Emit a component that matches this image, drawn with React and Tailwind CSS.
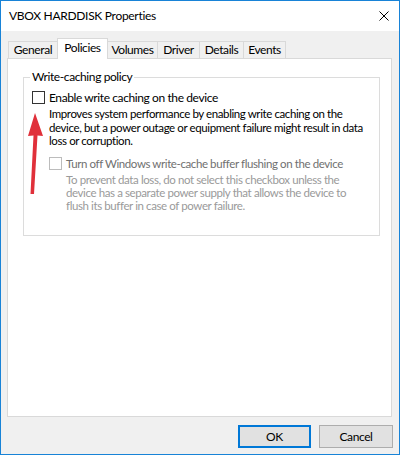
import React from 'react';

const tabs = [
  { name: 'General', w: 'w-[50px]' },
  { name: 'Policies', w: 'w-[51px]', active: true },
  { name: 'Volumes', w: 'w-[51px]' },
  { name: 'Driver', w: 'w-[43px]' },
  { name: 'Details', w: 'w-[45px]' },
  { name: 'Events', w: 'w-[43px]' },
];

function Checkbox({ disabled }) {
  return (
    <div
      className={`w-[13px] h-[13px] shrink-0 bg-white border ${
        disabled ? 'border-[#bcbcbc]' : 'border-[#333333]'
      }`}
    />
  );
}

export default function App() {
  return (
    <div
      className="relative w-[400px] h-[455px] flex flex-col bg-[#f0f0f0] border border-[#1883d7] text-[11.5px] tracking-[-0.4px] text-black overflow-hidden whitespace-nowrap"
      style={{ fontFamily: 'Lato, "Noto Sans", sans-serif' }}
    >
      {/* Title bar */}
      <div className="h-[30px] shrink-0 bg-white flex items-center justify-between pl-[8px] pr-[10px]">
        <span className="leading-none text-[12px] tracking-[-0.3px]">VBOX HARDDISK Properties</span>
        <svg width="10" height="10" viewBox="0 0 10 10">
          <path d="M0.5 0.5 L9.5 9.5 M9.5 0.5 L0.5 9.5" stroke="#000" strokeWidth="1" />
        </svg>
      </div>

      {/* Tabs */}
      <div className="pt-[7px] pl-[7px] h-[27px] shrink-0 flex items-end">
        {tabs.map((t, i) => (
          <div
            key={t.name}
            className={`${t.w} ${i > 0 ? '-ml-px' : ''} flex items-center justify-center border-l border-t border-r border-[#d9d9d9] leading-none text-[12px] ${
              t.active
                ? 'h-[21px] -mb-px bg-white relative z-10 pb-[2px]'
                : 'h-[17px] bg-[#f0f0f0]'
            }`}
          >
            {t.name}
          </div>
        ))}
      </div>

      {/* Panel */}
      <div className="ml-[6px] w-[385px] h-[359px] shrink-0 bg-white border border-[#d9d9d9]">
        <div className="relative ml-[15px] mt-[18px] w-[357px] h-[159px] border border-[#dcdcdc]">
          <span className="absolute -top-[9px] left-[6px] px-[2px] bg-white leading-[16px] text-[12px]">
            Write-caching policy
          </span>

          <div className="pl-[8px] pt-[12px]">
            <div className="flex items-center gap-[4px] h-[15px]">
              <Checkbox />
              <span className="leading-[15px] text-[12px]">Enable write caching on the device</span>
            </div>
            <div className="pl-[17px] mt-[2px] leading-[13.5px]">
              <div>Improves system performance by enabling write caching on the</div>
              <div>device, but a power outage or equipment failure might result in data</div>
              <div>loss or corruption.</div>
            </div>

            <div className="pl-[17px] mt-[8px]">
              <div className="flex items-center gap-[4px] h-[15px]">
                <Checkbox disabled />
                <span className="leading-[15px] text-[#707070]">
                  Turn off Windows write-cache buffer flushing on the device
                </span>
              </div>
              <div className="pl-[17px] mt-[2px] leading-[13px] text-[#9a9a9a]">
                <div>To prevent data loss, do not select this checkbox unless the</div>
                <div>device has a separate power supply that allows the device to</div>
                <div>flush its buffer in case of power failure.</div>
              </div>
            </div>
          </div>
        </div>
      </div>

      {/* Buttons */}
      <div className="flex justify-end gap-[8px] pr-[6px] pt-[8px]">
        <button className="w-[73px] h-[23px] bg-[#e1e1e1] border-2 border-[#0078d7] leading-none text-[12px]">
          OK
        </button>
        <button className="w-[74px] h-[23px] bg-[#e1e1e1] border border-[#adadad] leading-none text-[12px]">
          Cancel
        </button>
      </div>

      {/* Red annotation arrow */}
      <svg className="absolute left-0 top-0 pointer-events-none" width="400" height="455">
        <path d="M34 112 L42 135 L36.5 134.5 L33 193 L29.5 193 L32.5 134.5 L27 135 Z" fill="#e0303a" />
      </svg>
    </div>
  );
}
